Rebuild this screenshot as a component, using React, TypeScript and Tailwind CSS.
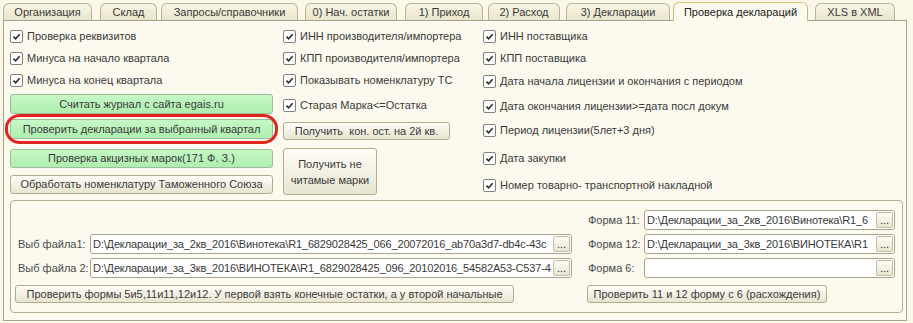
import React from 'react';

const tabs = [
  { name: 'Организация', w: 'w-[89px]', ml: 'ml-0' },
  { name: 'Склад', w: 'w-[57px]', ml: 'ml-[8px]' },
  { name: 'Запросы/справочники', w: 'w-[137px]', ml: 'ml-[4px]' },
  { name: '0) Нач. остатки', w: 'w-[92px]', ml: 'ml-[7px]' },
  { name: '1) Приход', w: 'w-[78px]', ml: 'ml-[8px]' },
  { name: '2) Расход', w: 'w-[72px]', ml: 'ml-[5px]' },
  { name: '3) Декларации', w: 'w-[104px]', ml: 'ml-[6px]' },
  { name: 'Проверка деклараций', w: 'w-[135px]', ml: 'ml-[3px]', active: true },
  { name: 'XLS в XML', w: 'w-[80px]', ml: 'ml-[7px]' },
];

const Check: React.FC<{ label: string; className?: string }> = ({ label, className = '' }) => (
  <div className={`flex items-center h-[22px] gap-[4px] ${className}`}>
    <span className="w-[13px] h-[13px] shrink-0 border border-[#808080] rounded-[2px] bg-white flex items-center justify-center">
      <svg viewBox="0 0 10 10" className="w-[9px] h-[9px]">
        <path d="M1.6 5.2 L4 7.6 L8.5 2.4" stroke="#2f2f2f" strokeWidth="1.8" fill="none" />
      </svg>
    </span>
    <span className="whitespace-nowrap">{label}</span>
  </div>
);

const GreenBtn: React.FC<{ children: React.ReactNode; className?: string }> = ({ children, className = '' }) => (
  <div
    className={`flex items-center justify-center border border-[#9dbb9d] rounded-[3px] bg-[linear-gradient(#c6f8c6,#aeeeae)] whitespace-nowrap ${className}`}
  >
    {children}
  </div>
);

const GrayBtn: React.FC<{ children: React.ReactNode; className?: string }> = ({ children, className = '' }) => (
  <div
    className={`flex items-center justify-center border border-[#b0ab91] rounded-[3px] bg-[linear-gradient(#fffef8,#e8e4d0)] whitespace-nowrap text-center ${className}`}
  >
    {children}
  </div>
);

// поле выбора файла с кнопкой "..."
const FileInput: React.FC<{ value: string; className?: string }> = ({ value, className = '' }) => (
  <div className={`flex h-[20px] shrink-0 border border-[#a9a690] rounded-[3px] bg-white overflow-hidden ${className}`}>
    <div className="flex-1 min-w-0 overflow-hidden whitespace-nowrap px-[2px] leading-[18px] tracking-[-0.15px]">{value}</div>
    <div className="w-[17px] shrink-0 my-[1px] mr-[1px] border border-[#c2bea6] rounded-[2px] bg-[linear-gradient(#fffef8,#e8e4d0)] flex items-end justify-center text-[11px] leading-[13px] text-[#333]">
      ...
    </div>
  </div>
);

export default function App() {
  return (
    <div className="w-[913px] h-[323px] bg-[#fbf8e9] text-[11px] text-[#3a3a3a] font-['Liberation_Sans',Arial,sans-serif] overflow-hidden">
      {/* tabs */}
      <div className="flex items-end h-[20px] pl-[3px]">
        {tabs.map((t) =>
          t.active ? (
            <div
              key={t.name}
              className={`${t.w} ${t.ml} h-[19px] -mb-[1px] relative z-10 flex items-center justify-center border border-b-0 border-[#c9b887] border-t-[#d8c07a] rounded-t-[6px] bg-[#fcfaee] text-[#222] whitespace-nowrap`}
            >
              {t.name}
            </div>
          ) : (
            <div
              key={t.name}
              className={`${t.w} ${t.ml} h-[17px] flex items-center justify-center border border-b-0 border-[#b9b497] rounded-t-[6px] bg-[linear-gradient(#f8f5e4,#e9e5cd)] whitespace-nowrap`}
            >
              {t.name}
            </div>
          ),
        )}
      </div>

      {/* panel */}
      <div className="ml-[3px] w-[904px] h-[301px] border border-[#a8a489] bg-[#fcfaee] relative">
        <div className="flex h-[179px] pl-[6px] pt-[4px]">
          {/* left column */}
          <div className="w-[263px] shrink-0 flex flex-col relative">
            <Check label="Проверка реквизитов" />
            <Check label="Минуса на начало квартала" />
            <Check label="Минуса на конец квартала" />
            <GreenBtn className="mt-[3px] h-[20px]">Считать журнал с сайта egais.ru</GreenBtn>
            <GreenBtn className="mt-[5px] h-[20px]">Проверить декларации за выбранный квартал</GreenBtn>
            <GreenBtn className="mt-[10px] h-[19px]">Проверка акцизных марок(171 Ф. З.)</GreenBtn>
            <GrayBtn className="mt-[7px] h-[19px]">Обработать номенклатуру Таможенного Союза</GrayBtn>
            {/* red marker */}
            <div className="absolute left-[-5px] top-[89px] w-[273px] h-[30px] border-[3px] border-[#e0251f] rounded-[15px/14px] pointer-events-none" />
          </div>

          {/* middle column */}
          <div className="w-[200px] shrink-0 ml-[10px] flex flex-col">
            <Check label="ИНН производителя/импортера" />
            <Check label="КПП производителя/импортера" />
            <Check label="Показывать номенклатуру ТС" />
            <Check label="Старая Марка<=Остатка" className="mt-[3px]" />
            <GrayBtn className="mt-[6px] h-[18px] w-[167px]">Получить&nbsp; кон. ост. на 2й кв.</GrayBtn>
            <GrayBtn className="mt-[8px] h-[47px] w-[94px] whitespace-normal leading-[16px]">
              Получить не
              <br />
              читамые марки
            </GrayBtn>
          </div>

          {/* right column */}
          <div className="flex flex-col">
            <Check label="ИНН поставщика" />
            <Check label="КПП поставщика" />
            <Check label="Дата начала лицензии и окончания с периодом" className="mt-[1px]" />
            <Check label="Дата окончания лицензии>=дата посл докум" className="mt-[3px]" />
            <Check label="Период лицензии(5лет+3 дня)" className="mt-[2px]" />
            <Check label="Дата закупки" className="mt-[6px]" />
            <Check label="Номер товарно- транспортной накладной" className="mt-[5px]" />
          </div>
        </div>

        {/* files group */}
        <div className="ml-[6px] w-[893px] h-[113px] border border-[#b4b097] rounded-[4px] flex pt-[9px] pl-[4px]">
          <div className="w-[557px] shrink-0 flex flex-col">
            <div className="h-[20px]" />
            <div className="flex items-center mt-[4px] pl-[3px]">
              <span className="w-[72px] shrink-0 whitespace-nowrap text-[#4a4a4a]">Выб файла1:</span>
              <FileInput className="w-[482px]" value="D:\Декларации_за_2кв_2016\Винотека\R1_6829028425_066_20072016_ab70a3d7-db4c-43c" />
            </div>
            <div className="flex items-center mt-[4px] pl-[3px]">
              <span className="w-[72px] shrink-0 whitespace-nowrap text-[#4a4a4a]">Выб файла 2:</span>
              <FileInput className="w-[482px]" value="D:\Декларации_за_3кв_2016\ВИНОТЕКА\R1_6829028425_096_20102016_54582A53-C537-4" />
            </div>
            <GrayBtn className="mt-[7px] h-[18px] w-[499px]">
              Проверить формы 5и5,11и11,12и12. У первой взять конечные остатки, а у второй начальные
            </GrayBtn>
          </div>
          <div className="ml-[15px] shrink-0 flex flex-col">
            <div className="flex items-center">
              <span className="w-[57px] shrink-0 whitespace-nowrap pl-[1px] text-[#4a4a4a]">Форма 11:</span>
              <FileInput className="w-[251px]" value="D:\Декларации_за_2кв_2016\Винотека\R1_6" />
            </div>
            <div className="flex items-center mt-[4px]">
              <span className="w-[57px] shrink-0 whitespace-nowrap pl-[1px] text-[#4a4a4a]">Форма 12:</span>
              <FileInput className="w-[251px]" value="D:\Декларации_за_3кв_2016\ВИНОТЕКА\R1" />
            </div>
            <div className="flex items-center mt-[4px]">
              <span className="w-[57px] shrink-0 whitespace-nowrap pl-[1px] text-[#4a4a4a]">Форма 6:</span>
              <FileInput className="w-[251px]" value="" />
            </div>
            <GrayBtn className="mt-[7px] h-[18px] w-[240px]">Проверить 11 и 12 форму с 6 (расхождения)</GrayBtn>
          </div>
        </div>
      </div>
    </div>
  );
}
